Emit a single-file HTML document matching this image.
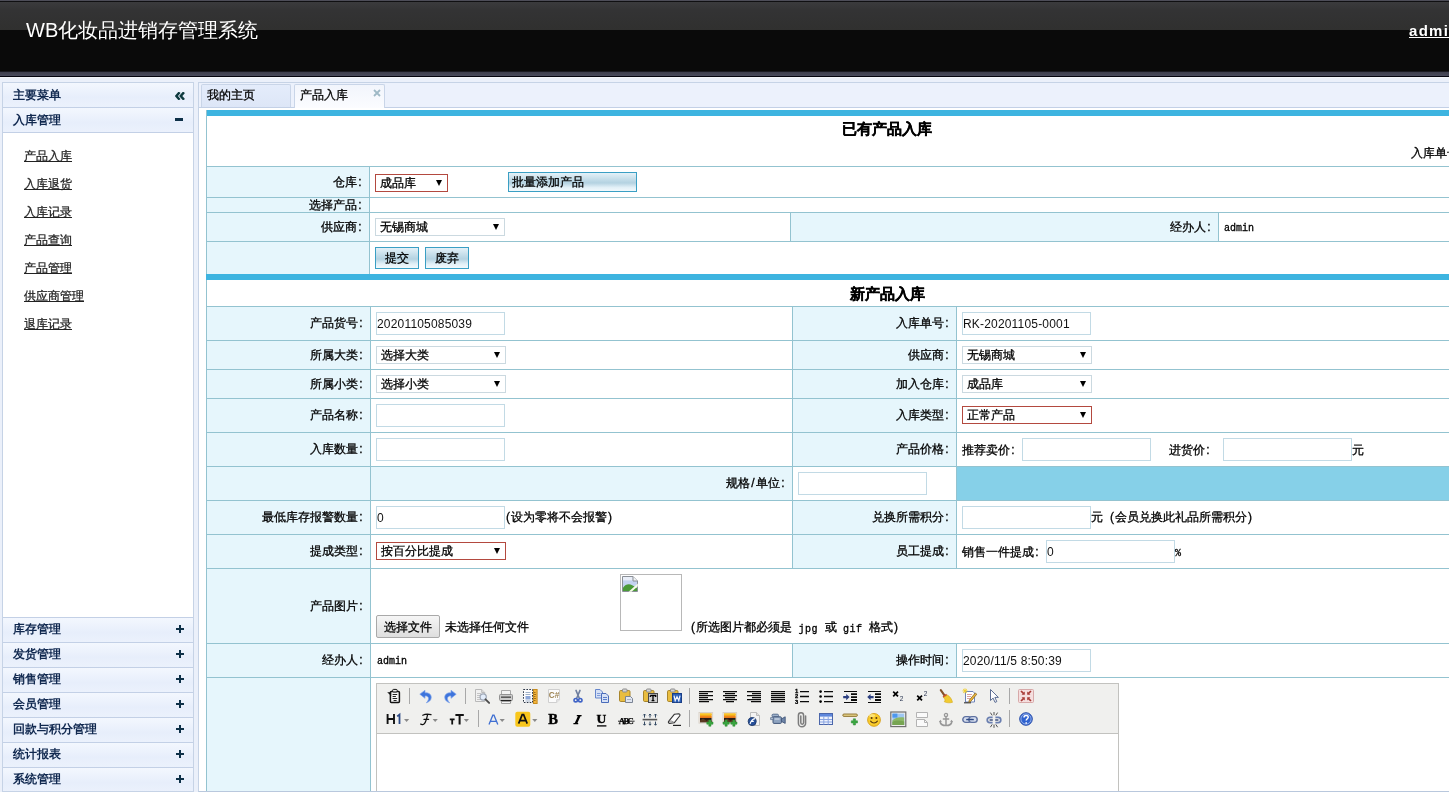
<!DOCTYPE html>
<html lang="zh">
<head>
<meta charset="utf-8">
<title>WB</title>
<style>
*{box-sizing:border-box;margin:0;padding:0}
html,body{width:1449px;height:792px;overflow:hidden;background:#ebf0fa;font-family:"Liberation Sans",sans-serif;font-size:12px;color:#000}
.a{position:absolute}
body>div{will-change:transform}
#hdr{left:0;top:0;width:1449px;height:78px;background:#0a0a0a}
#hdr .t0{left:0;top:0;width:1449px;height:1px;background:#4d4d58}
#hdr .t1{left:0;top:1px;width:1449px;height:1px;background:#101012}
#hdr .t2{left:0;top:2px;width:1449px;height:28px;background:linear-gradient(#3b3b3d,#333334 30%,#30302f)}
#hdr .t3{left:0;top:71px;width:1449px;height:1px;background:#1b1b22}
#hdr .t4{left:0;top:72px;width:1449px;height:4px;background:linear-gradient(#3e3f4d,#4a4c5e)}
#hdr .t5{left:0;top:76px;width:1449px;height:1px;background:#04040f}
#hdr .t6{left:0;top:77px;width:1449px;height:1px;background:#f4f7fb}
#title{left:26px;top:17px;font-size:20px;line-height:26px;color:#fff;white-space:nowrap}
#user{left:1409px;top:21px;font-size:15px;line-height:20px;font-weight:bold;color:#fff;text-decoration:underline;letter-spacing:1.3px;white-space:nowrap}

/* sidebar */
#side{left:2px;top:82px;width:192px;height:710px;background:#fff;border:1px solid #c6d3e6;overflow:hidden}
.ah{left:0;width:190px;height:25px;border-bottom:1px solid #c3d0e6;background:linear-gradient(#f3f7fe,#e7eefb 60%,#ebf1fc);color:#10284f;font-weight:bold;line-height:24px;padding-left:10px;white-space:nowrap}
.ah i{position:absolute;display:block;background:#0e3048}
.ml{left:21px;color:#222;text-decoration:underline;line-height:14px;white-space:nowrap}

/* main */
#main{left:198px;top:82px;width:1260px;height:710px;background:#fff;border:1px solid #c6d3e6;border-bottom-color:#b9c8dd;overflow:hidden}
#tabs{left:0;top:0;width:1258px;height:25px;background:#ecf1fc;border-bottom:1px solid #c3d0e6}
.tab{-webkit-text-stroke:.3px #000;top:1px;height:23px;border:1px solid #c9d5e8;border-bottom:0;line-height:20px;padding-left:4px;white-space:nowrap;border-radius:2px 2px 0 0}

/* page-coordinate layer */
#pg{left:-199px;top:-83px;width:1449px;height:792px;-webkit-text-stroke:.3px #000}
.ml{-webkit-text-stroke:.25px #222}
.bar{left:206px;width:1243px;height:6px;background:#3db4e0}
.hl{left:206px;width:1243px;height:1px;background:#93c3d0}
.vl{width:1px;background:#93c3d0}
.lb{background:#e6f6fc}
.lt{text-align:right;white-space:nowrap;line-height:14px;height:14px}
s{display:inline-block;width:6px;text-align:center;text-decoration:none}
.tx{white-space:nowrap;line-height:14px;height:14px}
.h1{font-weight:bold;font-size:15px;line-height:18px;text-align:center;width:200px;left:787px;white-space:nowrap}
.in{-webkit-text-stroke:0;height:23px;width:129px;border:1px solid #c2dae5;background:#fff;line-height:20px;padding:1px 0 0 0;white-space:nowrap;letter-spacing:.18px;color:#111}
.se{height:18px;width:130px;border:1px solid #cbd9e0;background:#fff;line-height:16px;padding-left:4px;white-space:nowrap}
.se.r{border-color:#b3493f}
.se:after{content:"";position:absolute;right:5px;top:5px;border:3.5px solid transparent;border-top:6px solid #000;border-bottom:0}
.bt{height:22px;border:1px solid #3a9fc4;background:linear-gradient(#e4f1f8,#c4dde9 35%,#b4d2e1 55%,#e2f0f7 80%,#f2f9fc);line-height:20px;text-align:center;white-space:nowrap}
.mn{font-family:"Liberation Mono",monospace;font-size:10px;position:relative;top:1px;letter-spacing:.5px}
.mono{margin-top:2px;font-family:"Liberation Mono",monospace;font-size:10px;letter-spacing:0}
</style>
</head>
<body>
<div id="hdr" class="a">
  <div class="a t0"></div><div class="a t1"></div><div class="a t2"></div>
  <div class="a t3"></div><div class="a t4"></div><div class="a t5"></div><div class="a t6"></div>
  <div id="title" class="a">WB化妆品进销存管理系统</div>
  <div id="user" class="a">admin</div>
</div>

<div id="side" class="a">
  <div class="a ah" style="top:0">主要菜单<svg class="a" style="left:172px;top:9px" width="10" height="8" viewBox="0 0 10 8"><path d="M4.6 0.3 L1.4 4 L4.6 7.7 M9 0.3 L5.8 4 L9 7.7" fill="none" stroke="#0e3a3f" stroke-width="2.5"/></svg></div>
  <div class="a ah" style="top:25px">入库管理<i style="left:172px;top:10px;width:8px;height:3px"></i></div>
  <div class="a ml" style="top:66px">产品入库</div>
  <div class="a ml" style="top:94px">入库退货</div>
  <div class="a ml" style="top:122px">入库记录</div>
  <div class="a ml" style="top:150px">产品查询</div>
  <div class="a ml" style="top:178px">产品管理</div>
  <div class="a ml" style="top:206px">供应商管理</div>
  <div class="a ml" style="top:234px">退库记录</div>
  <div class="a ah" style="top:534px;height:26px;line-height:22px;border-top:1px solid #c3d0e6">库存管理<i style="left:173px;top:10px;width:8px;height:2px"></i><i style="left:176px;top:7px;width:2px;height:8px"></i></div>
  <div class="a ah" style="top:559px;height:26px;line-height:22px;border-top:1px solid #c3d0e6">发货管理<i style="left:173px;top:10px;width:8px;height:2px"></i><i style="left:176px;top:7px;width:2px;height:8px"></i></div>
  <div class="a ah" style="top:584px;height:26px;line-height:22px;border-top:1px solid #c3d0e6">销售管理<i style="left:173px;top:10px;width:8px;height:2px"></i><i style="left:176px;top:7px;width:2px;height:8px"></i></div>
  <div class="a ah" style="top:609px;height:26px;line-height:22px;border-top:1px solid #c3d0e6">会员管理<i style="left:173px;top:10px;width:8px;height:2px"></i><i style="left:176px;top:7px;width:2px;height:8px"></i></div>
  <div class="a ah" style="top:634px;height:26px;line-height:22px;border-top:1px solid #c3d0e6">回款与积分管理<i style="left:173px;top:10px;width:8px;height:2px"></i><i style="left:176px;top:7px;width:2px;height:8px"></i></div>
  <div class="a ah" style="top:659px;height:26px;line-height:22px;border-top:1px solid #c3d0e6">统计报表<i style="left:173px;top:10px;width:8px;height:2px"></i><i style="left:176px;top:7px;width:2px;height:8px"></i></div>
  <div class="a ah" style="top:684px;height:26px;line-height:22px;border-top:1px solid #c3d0e6">系统管理<i style="left:173px;top:10px;width:8px;height:2px"></i><i style="left:176px;top:7px;width:2px;height:8px"></i></div>
</div>

<div id="main" class="a">
  <div id="tabs" class="a"></div>
  <div class="a tab" style="left:2px;width:90px;padding-left:5px;background:linear-gradient(#e4ecfb,#dde6f7)">我的主页</div>
  <div class="a tab" style="left:95px;width:91px;padding-left:5px;background:linear-gradient(#f2f5fc,#fbfcff);height:24px">产品入库<svg class="a" style="left:78px;top:4px" width="8" height="8" viewBox="0 0 8 8"><path d="M1 1 L7 7 M7 1 L1 7" stroke="#9fb9c6" stroke-width="1.8" fill="none"/></svg></div>
<div id="pg" class="a">
<div class="a bar" style="top:110px"></div>
<div class="a vl" style="left:206px;top:110px;height:682px"></div>
<div class="a h1" style="top:120px">已有产品入库</div>
<div class="a tx" style="left:1411px;top:146px">入库单号：</div>
<div class="a lb" style="left:207px;top:167px;width:162px;height:107px"></div>
<div class="a lb" style="left:791px;top:213px;width:427px;height:28px"></div>
<div class="a hl" style="top:166px"></div>
<div class="a hl" style="top:197px"></div>
<div class="a hl" style="top:212px"></div>
<div class="a hl" style="top:241px"></div>
<div class="a vl" style="left:369px;top:166px;height:108px"></div>
<div class="a vl" style="left:790px;top:212px;height:30px"></div>
<div class="a vl" style="left:1218px;top:212px;height:30px"></div>
<div class="a lt" style="left:207px;width:156px;top:175px">仓库<s>:</s></div>
<div class="a lt" style="left:207px;width:156px;top:198px">选择产品<s>:</s></div>
<div class="a lt" style="left:207px;width:156px;top:220px">供应商<s>:</s></div>
<div class="a lt" style="left:791px;width:421px;top:220px">经办人<s>:</s></div>
<div class="a tx mono" style="left:1224px;top:220px">admin</div>
<div class="a se r" style="left:375px;top:174px;width:73px">成品库</div>
<div class="a bt" style="left:508px;top:172px;width:129px;height:20px;line-height:18px;text-align:left;padding-left:3px">批量添加产品</div>
<div class="a se" style="left:375px;top:218px">无锡商城</div>
<div class="a bt" style="left:375px;top:247px;width:44px">提交</div>
<div class="a bt" style="left:425px;top:247px;width:44px">废弃</div>
<div class="a bar" style="top:274px"></div>
<div class="a h1" style="top:285px">新产品入库</div>
<div class="a lb" style="left:207px;top:307px;width:163px;height:485px"></div>
<div class="a lb" style="left:793px;top:307px;width:163px;height:159px"></div>
<div class="a lb" style="left:371px;top:467px;width:421px;height:33px"></div>
<div class="a" style="left:957px;top:467px;width:492px;height:33px;background:#86d0e8"></div>
<div class="a lb" style="left:793px;top:501px;width:163px;height:67px"></div>
<div class="a lb" style="left:793px;top:644px;width:163px;height:33px"></div>
<div class="a hl" style="top:306px"></div>
<div class="a hl" style="top:340px"></div>
<div class="a hl" style="top:369px"></div>
<div class="a hl" style="top:398px"></div>
<div class="a hl" style="top:432px"></div>
<div class="a hl" style="top:466px"></div>
<div class="a hl" style="top:500px"></div>
<div class="a hl" style="top:534px"></div>
<div class="a hl" style="top:568px"></div>
<div class="a hl" style="top:643px"></div>
<div class="a hl" style="top:677px"></div>
<div class="a vl" style="left:370px;top:306px;height:486px"></div>
<div class="a vl" style="left:792px;top:306px;height:263px"></div>
<div class="a vl" style="left:956px;top:306px;height:263px"></div>
<div class="a vl" style="left:792px;top:643px;height:35px"></div>
<div class="a vl" style="left:956px;top:643px;height:35px"></div>
<div class="a lt" style="left:207px;width:157px;top:316px">产品货号<s>:</s></div>
<div class="a in" style="left:376px;top:312px;width:129px">20201105085039</div>
<div class="a lt" style="left:793px;width:157px;top:316px">入库单号<s>:</s></div>
<div class="a in" style="left:962px;top:312px;width:129px">RK-20201105-0001</div>
<div class="a lt" style="left:207px;width:157px;top:348px">所属大类<s>:</s></div>
<div class="a se" style="left:376px;top:346px;width:130px">选择大类</div>
<div class="a lt" style="left:793px;width:157px;top:348px">供应商<s>:</s></div>
<div class="a se" style="left:962px;top:346px;width:130px">无锡商城</div>
<div class="a lt" style="left:207px;width:157px;top:377px">所属小类<s>:</s></div>
<div class="a se" style="left:376px;top:375px;width:130px">选择小类</div>
<div class="a lt" style="left:793px;width:157px;top:377px">加入仓库<s>:</s></div>
<div class="a se" style="left:962px;top:375px;width:130px">成品库</div>
<div class="a lt" style="left:207px;width:157px;top:408px">产品名称<s>:</s></div>
<div class="a in" style="left:376px;top:404px;width:129px"></div>
<div class="a lt" style="left:793px;width:157px;top:408px">入库类型<s>:</s></div>
<div class="a se r" style="left:962px;top:406px;width:130px">正常产品</div>
<div class="a lt" style="left:207px;width:157px;top:442px">入库数量<s>:</s></div>
<div class="a in" style="left:376px;top:438px;width:129px"></div>
<div class="a lt" style="left:793px;width:157px;top:442px">产品价格<s>:</s></div>
<div class="a tx" style="left:962px;top:443px">推荐卖价<s>:</s></div>
<div class="a in" style="left:1022px;top:438px;width:129px"></div>
<div class="a tx" style="left:1169px;top:443px">进货价<s>:</s></div>
<div class="a in" style="left:1223px;top:438px;width:129px"></div>
<div class="a tx" style="left:1352px;top:443px">元</div>
<div class="a lt" style="left:371px;width:415px;top:476px">规格<s>/</s>单位<s>:</s></div>
<div class="a in" style="left:798px;top:472px;width:129px"></div>
<div class="a lt" style="left:207px;width:157px;top:510px">最低库存报警数量<s>:</s></div>
<div class="a in" style="left:376px;top:506px;width:129px">0</div>
<div class="a tx" style="left:505px;top:510px"><s>(</s>设为零将不会报警<s>)</s></div>
<div class="a lt" style="left:793px;width:157px;top:510px">兑换所需积分<s>:</s></div>
<div class="a in" style="left:962px;top:506px;width:129px"></div>
<div class="a tx" style="left:1091px;top:510px">元<s> </s><s>(</s>会员兑换此礼品所需积分<s>)</s></div>
<div class="a lt" style="left:207px;width:157px;top:544px">提成类型<s>:</s></div>
<div class="a se r" style="left:376px;top:542px;width:130px">按百分比提成</div>
<div class="a lt" style="left:793px;width:157px;top:544px">员工提成<s>:</s></div>
<div class="a tx" style="left:962px;top:545px">销售一件提成<s>:</s></div>
<div class="a in" style="left:1046px;top:540px;width:129px">0</div>
<div class="a tx mono" style="left:1175px;top:545px">%</div>
<div class="a lt" style="left:207px;width:157px;top:599px">产品图片<s>:</s></div>
<div class="a" style="left:376px;top:615px;width:64px;height:23px;border:1px solid #a9a9a9;border-radius:2px;background:linear-gradient(#f6f6f6,#dedede);line-height:22px;text-align:center;white-space:nowrap">选择文件</div>
<div class="a tx" style="left:445px;top:620px">未选择任何文件</div>
<div class="a" style="left:620px;top:574px;width:62px;height:57px;border:1px solid #b8b8b8;background:#fff"><svg class="a" style="left:1px;top:1px" width="16" height="16" viewBox="0 0 16 16"><path d="M.5.5h10.500l4.500 4.500v10.500H.5z" fill="#c4d3f0" stroke="#8a8f96"/><path d="M1 1h9.800v3.400H1z" fill="#e9eef8"/><path d="M1 15v-3.200c2.400-3.800 6.200-4.400 9.200-2.600L15 12v3z" fill="#4b9a38"/><path d="M11 .5v4.500h4.500" fill="#f3f3f3" stroke="#8a8f96"/><path d="M6.500 15.800L15.800 7.500v2.800L9.600 15.800z" fill="#f6fbe8"/></svg></div>
<div class="a tx" style="left:690px;top:620px"><s>(</s>所选图片都必须是<span class="mn">&nbsp;jpg&nbsp;</span>或<span class="mn">&nbsp;gif&nbsp;</span>格式<s>)</s></div>
<div class="a lt" style="left:207px;width:157px;top:653px">经办人<s>:</s></div>
<div class="a tx mono" style="left:377px;top:653px">admin</div>
<div class="a lt" style="left:793px;width:157px;top:653px">操作时间<s>:</s></div>
<div class="a in" style="left:962px;top:649px;width:129px">2020/11/5 8:50:39</div>
<div id="ed" class="a" style="left:376px;top:683px;width:743px;height:120px;border:1px solid #c2c2bf;background:#fff"><div class="a" style="left:0;top:0;width:741px;height:50px;background:#f0f0ee;border-bottom:1px solid #c2c2bf"></div><!--ICONS-->
<svg class="a" style="left:9px;top:4px" width="16" height="16" viewBox="0 0 16 16"><path d="M5.400 3.600h7a1 1 0 0 1 1 1v8.800a1 1 0 0 1-1 1h-7a1 1 0 0 1-1-1V4.600a1 1 0 0 1 1-1z" fill="#f6f6f6" stroke="#111" stroke-width="1.5"/><rect x="6.600" y="1.400" width="4.600" height="2.600" rx="1" fill="#e8e8e8" stroke="#111"/><path d="M6.600 6.500h4.600M6.600 8.500h3.300M6.600 10.500h4.600M7.600 12.500h3" stroke="#222"/><path d="M1.200 4.200l4 3.800V4.200z" fill="#111"/></svg>
<div class="a" style="left:32px;top:4px;width:1px;height:16px;background:#a8a8a8"></div>
<svg class="a" style="left:41px;top:4px" width="16" height="16" viewBox="0 0 16 16"><path d="M1.8 6.2L7 2.3v2.5c4.2-.3 6.6 2 6.2 5.2-.3 2.4-2.3 4-4.9 4.8 2-1.9 2.6-3.9 2-5.3-.5-1.2-1.6-1.7-3.3-1.6v2.4z" fill="#3d74dc" stroke="#7fa3ea" stroke-width=".7"/></svg>
<svg class="a" style="left:65px;top:4px" width="16" height="16" viewBox="0 0 16 16"><g transform="translate(16 0) scale(-1 1)"><path d="M1.8 6.2L7 2.3v2.5c4.2-.3 6.6 2 6.2 5.2-.3 2.4-2.3 4-4.9 4.8 2-1.9 2.6-3.9 2-5.3-.5-1.2-1.6-1.7-3.3-1.6v2.4z" fill="#3d74dc" stroke="#7fa3ea" stroke-width=".7"/></g></svg>
<div class="a" style="left:88px;top:4px;width:1px;height:16px;background:#a8a8a8"></div>
<svg class="a" style="left:97px;top:4px" width="16" height="16" viewBox="0 0 16 16"><path d="M1.5 1.5h6.2l3 3v9h-9.2z" fill="#f1f1f1" stroke="#b9b9b9"/><path d="M7.7 1.5v3h3" fill="#ddd" stroke="#b9b9b9"/><path d="M3 5.5h4M3 7.5h3M3 9.5h3M3 11.5h4" stroke="#c4c4c4"/><circle cx="9.2" cy="9" r="3.1" fill="#e3edfb" stroke="#9da6b5" stroke-width="1.2"/><path d="M11.5 11.3l3.6 3.6" stroke="#4c4c4c" stroke-width="1.9" stroke-linecap="round"/></svg>
<svg class="a" style="left:121px;top:4px" width="16" height="16" viewBox="0 0 16 16"><path d="M3.5 2.5h9v4h-9z" fill="#f4f4f4" stroke="#a9a9a9"/><rect x="1.5" y="6.5" width="13" height="6" rx="1" fill="#cbcbcb" stroke="#929292"/><path d="M3 9.200h10" stroke="#5c5c5c" stroke-width="1.600"/><path d="M2.800 12.800h10.400" stroke="#111" stroke-width="1.300"/><path d="M3.500 13.500h9v2h-9z" fill="#f4f4f4" stroke="#a0a0a0"/></svg>
<svg class="a" style="left:145px;top:4px" width="16" height="16" viewBox="0 0 16 16"><rect x="1.5" y="1.5" width="9" height="13" fill="#fdfdfd" stroke="#2b3546" stroke-dasharray="1.600 1.300"/><path d="M3.5 4.5h5M3.5 6.5h5" stroke="#9fb0c8"/><rect x="3.5" y="8" width="5" height="3.5" fill="#8da7d8"/><path d="M3.5 13h5" stroke="#9fb0c8"/><rect x="11.5" y="1.5" width="3.6" height="14" fill="#f3b43c" stroke="#c78d1f"/><path d="M12 4.5h1.5M12 6.5h2M12 8.5h1.5M12 10.5h2M12 12.5h1.5" stroke="#8a5d10" stroke-width=".8"/></svg>
<svg class="a" style="left:169px;top:4px" width="16" height="16" viewBox="0 0 16 16"><path d="M2.5 1.5h11v10.2l-2.8 2.8H2.5z" fill="#fbfbfb" stroke="#cfcfcf"/><path d="M13.5 11.7h-2.8v2.8" fill="#e9e9e9" stroke="#cfcfcf"/><text x="2.800" y="10.200" font-family="Liberation Sans" font-weight="bold" font-size="8.300" fill="#9c8352">C#</text></svg>
<svg class="a" style="left:193px;top:4px" width="16" height="16" viewBox="0 0 16 16"><path d="M6 2.400l3.200 7.600M10 2.400L6.800 10" stroke="#6f7f9f" stroke-width="1.600" stroke-linecap="round"/><circle cx="5.700" cy="12.200" r="1.700" fill="none" stroke="#3f63c6" stroke-width="1.600"/><circle cx="10.300" cy="12.200" r="1.700" fill="none" stroke="#3f63c6" stroke-width="1.600"/></svg>
<svg class="a" style="left:217px;top:4px" width="16" height="16" viewBox="0 0 16 16"><path d="M1.500 1.500h4.500l2.500 2.500v6h-7z" fill="#d6e1f6" stroke="#6686cc"/><path d="M3 5.500h3.500M3 7.500h3.500" stroke="#7f9bd8"/><path d="M7.500 5.500h4.500l2.500 2.500v6.500h-7z" fill="#d6e1f6" stroke="#4a6cba"/><path d="M9 9.500h4M9 11.500h4" stroke="#5b7ecb"/></svg>
<svg class="a" style="left:241px;top:4px" width="16" height="16" viewBox="0 0 16 16"><rect x="1.5" y="2.5" width="10.5" height="11" rx="1.2" fill="#e9bd3f" stroke="#a9862b"/><rect x="4.5" y="1" width="4.5" height="3" rx=".8" fill="#d4d4d4" stroke="#8c8c8c"/><path d="M7.5 8.5h5l2 2v4h-7z" fill="#dfe5f0" stroke="#7b8494"/><path d="M9 11.5h4" stroke="#aab3c4"/></svg>
<svg class="a" style="left:265px;top:4px" width="16" height="16" viewBox="0 0 16 16"><rect x="1.5" y="2.5" width="10.5" height="11" rx="1.2" fill="#e9bd3f" stroke="#a9862b"/><rect x="4.5" y="1" width="4.5" height="3" rx=".8" fill="#d4d4d4" stroke="#8c8c8c"/><rect x="6.500" y="5.500" width="9" height="9" fill="#cfcfcf" stroke="#4a4a4a"/><path d="M8.300 7.500h5.400v1.600M8.300 7.500v1.600M11 7.500v5.200M9.600 12.700h2.800" stroke="#000" stroke-width="1.300" fill="none"/></svg>
<svg class="a" style="left:289px;top:4px" width="16" height="16" viewBox="0 0 16 16"><rect x="1.5" y="2.5" width="10.5" height="11" rx="1.2" fill="#e9bd3f" stroke="#a9862b"/><rect x="4.5" y="1" width="4.5" height="3" rx=".8" fill="#d4d4d4" stroke="#8c8c8c"/><rect x="6.500" y="5.500" width="9" height="9" fill="#2b5fb6" stroke="#1b3f86"/><path d="M8 7.600l1.200 5 1.800-4 1.800 4 1.200-5" stroke="#f4f7ff" stroke-width="1.200" fill="none"/></svg>
<div class="a" style="left:312px;top:4px;width:1px;height:16px;background:#a8a8a8"></div>
<svg class="a" style="left:321px;top:4px" width="16" height="16" viewBox="0 0 16 16"><path d="M1 3.6h14M1 5.6h9M1 7.6h14M1 9.6h9M1 11.6h14M1 13.6h10" stroke="#0a0a0a" stroke-width="1.15"/></svg>
<svg class="a" style="left:345px;top:4px" width="16" height="16" viewBox="0 0 16 16"><path d="M1 3.6h14M3 5.6h10M1 7.6h14M3 9.6h10M1 11.6h14M4 13.6h8" stroke="#0a0a0a" stroke-width="1.15"/></svg>
<svg class="a" style="left:369px;top:4px" width="16" height="16" viewBox="0 0 16 16"><path d="M1 3.6h14M6 5.6h9M1 7.6h14M6 9.6h9M1 11.6h14M5 13.6h10" stroke="#0a0a0a" stroke-width="1.15"/></svg>
<svg class="a" style="left:393px;top:4px" width="16" height="16" viewBox="0 0 16 16"><path d="M1 3.6h14M1 5.6h14M1 7.6h14M1 9.6h14M1 11.6h14M1 13.6h14" stroke="#0a0a0a" stroke-width="1.15"/></svg>
<svg class="a" style="left:417px;top:4px" width="16" height="16" viewBox="0 0 16 16"><path d="M6 3.6h9M6 8.5h9M6 13.6h9" stroke="#0a0a0a" stroke-width="1.3"/><g font-family="Liberation Sans" font-weight="bold" font-size="5.800" fill="#000" stroke="#000" stroke-width=".300"><text x="1" y="5.4">1</text><text x="1" y="10.4">2</text><text x="1" y="15.6">3</text></g></svg>
<svg class="a" style="left:441px;top:4px" width="16" height="16" viewBox="0 0 16 16"><path d="M6 3.6h9M6 8.5h9M6 13.6h9" stroke="#0a0a0a" stroke-width="1.3"/><circle cx="2.6" cy="3.6" r="1.3"/><circle cx="2.6" cy="8.5" r="1.3"/><circle cx="2.6" cy="13.6" r="1.3"/></svg>
<svg class="a" style="left:465px;top:4px" width="16" height="16" viewBox="0 0 16 16"><path d="M2 3.500h13M2 14.500h13" stroke="#0a0a0a" stroke-width="1.100"/><path d="M9 6.200h6M9 9.100h6M9 12h6" stroke="#0a0a0a" stroke-width="1.800"/><path d="M1.200 8h3V6l3.400 3.100L4.200 12.200v-2h-3z" fill="#2c3f80"/></svg>
<svg class="a" style="left:489px;top:4px" width="16" height="16" viewBox="0 0 16 16"><path d="M2 3.500h13M2 14.500h13" stroke="#0a0a0a" stroke-width="1.100"/><path d="M9 6.200h6M9 9.100h6M9 12h6" stroke="#0a0a0a" stroke-width="1.800"/><path d="M7.600 8h-3V6L1.200 9.100l3.400 3.100v-2h3z" fill="#2c3f80"/></svg>
<svg class="a" style="left:513px;top:4px" width="16" height="16" viewBox="0 0 16 16"><path d="M3.2 3.6l4.800 4.800M8 3.600l-4.800 4.800" stroke="#000" stroke-width="1.700"/><text x="9.800" y="13.400" font-family="Liberation Sans" font-size="6.5" fill="#26324f">2</text></svg>
<svg class="a" style="left:537px;top:4px" width="16" height="16" viewBox="0 0 16 16"><path d="M3.200 7.600l4.800 4.800M8 7.600l-4.800 4.800" stroke="#000" stroke-width="1.700"/><text x="9.800" y="8" font-family="Liberation Sans" font-size="6.5" fill="#26324f">2</text></svg>
<svg class="a" style="left:561px;top:4px" width="16" height="16" viewBox="0 0 16 16"><path d="M2.800 2.200l4 5.600" stroke="#84522a" stroke-width="2.1" stroke-linecap="round"/><path d="M4.6 8.2l3.6-2.4 1.2 1.6-3.7 2.5z" fill="#c9502e"/><path d="M5.6 9.6l3.9-2.5c2.6 1.6 4.3 4 5 7.2-3 .9-5.7.6-8.3-.6 1.3-1 1-2.6-.6-4.1z" fill="#f1cb31" stroke="#d5a91c" stroke-width=".6"/></svg>
<svg class="a" style="left:585px;top:4px" width="16" height="16" viewBox="0 0 16 16"><path d="M3.5 3.5h7.5l1.5 1.5v9h-9z" fill="#fff" stroke="#6c82b8"/><path d="M5 6.5h5M5 8.5h4M5 10.5h3" stroke="#d9a0a0"/><path d="M2 14.8h7" stroke="#333" stroke-width="1.1"/><path d="M14.8 6.2l-6 7.2-2 .9.5-2.2 6-7.1z" fill="#f0b73a" stroke="#8a6a22" stroke-width=".8"/><path d="M3 .4v5M.5 2.9h5M1.2 1.1l3.6 3.6M4.8 1.1L1.2 4.7" stroke="#f2cf2f" stroke-width="1"/></svg>
<svg class="a" style="left:609px;top:4px" width="16" height="16" viewBox="0 0 16 16"><path d="M4.5 1.5v11l2.6-2.4 1.9 4.3 1.8-.8-1.9-4.2h3.5z" fill="#fdfdff" stroke="#4d6089" stroke-width=".900" stroke-linejoin="round"/></svg>
<div class="a" style="left:632px;top:4px;width:1px;height:16px;background:#a8a8a8"></div>
<svg class="a" style="left:641px;top:4px" width="16" height="16" viewBox="0 0 16 16"><rect x=".5" y="1.5" width="15" height="13" rx="1" fill="#f5dfdf" stroke="#d7a9a9"/><g fill="#a83b37"><path d="M6.8 6.8H3.6l1-1L2.4 3.6l1.2-1.2 2.2 2.2 1-1zM9.2 6.8h3.2l-1-1 2.2-2.2-1.2-1.2-2.2 2.2-1-1zM6.8 9.2H3.6l1 1-2.2 2.2 1.2 1.2 2.2-2.2 1 1zM9.2 9.2h3.2l-1 1 2.2 2.2-1.2 1.2-2.2-2.2-1 1z"/></g></svg>
<svg class="a" style="left:9px;top:27px;overflow:visible" width="24" height="17" viewBox="0 0 24 17"><path d="M1.6 3v10M8 3v10M1.6 8h6.4" stroke="#111" stroke-width="1.9" fill="none"/><path d="M11.200 5.400l2.300-1.800V13" stroke="#2d4a86" stroke-width="1.8" fill="none"/><path d="M18 8h5.2l-2.6 3z" fill="#8a8a8a"/></svg>
<svg class="a" style="left:42px;top:27px;overflow:visible" width="22" height="17" viewBox="0 0 22 17"><path d="M3.800 4.300c2.200-1.300 5.400-1.500 8.200-.600M8.600 3.600c-.800 3.600-1.700 7-3 8.800-1.100 1.500-2.800 1.700-4 .7M5 8.400h4.600" stroke="#111" stroke-width="1.250" fill="none" stroke-linecap="round"/><path d="M13.6 8h5.2l-2.6 3z" fill="#8a8a8a"/></svg>
<svg class="a" style="left:71px;top:27px;overflow:visible" width="22" height="17" viewBox="0 0 22 17"><path d="M1.800 8.400h4.800M4.200 8.400v5" stroke="#111" stroke-width="1.800" fill="none"/><path d="M7.400 3.900h8.400M11.600 3.900v9.500" stroke="#111" stroke-width="2" fill="none"/><path d="M15.8 8h5.2l-2.6 3z" fill="#8a8a8a"/></svg>
<div class="a" style="left:101px;top:26px;width:1px;height:17px;background:#a8a8a8"></div>
<svg class="a" style="left:110px;top:27px;overflow:visible" width="18" height="17" viewBox="0 0 18 17"><path d="M2 13.600L5.800 4.200h1.200l3.800 9.400M3.400 10.300h6" stroke="#3f6fd2" stroke-width="1.300" fill="none"/><path d="M12.6 8h5.2l-2.6 3z" fill="#8a8a8a"/></svg>
<svg class="a" style="left:138px;top:27px;overflow:visible" width="23" height="17" viewBox="0 0 23 17"><rect x=".3" y=".8" width="15" height="15" rx="2" fill="#f8c61c"/><path d="M3.6 12.6L7.2 3.6h1.4l3.6 9M5 9.6h5.8" stroke="#111" stroke-width="1.7" fill="none"/><path d="M17.2 8h5.2l-2.6 3z" fill="#8a8a8a"/></svg>
<svg class="a" style="left:169px;top:27px;overflow:visible" width="16" height="17" viewBox="0 0 16 17"><text x="2.2" y="13.4" font-family="Liberation Serif" font-weight="bold" font-size="14.500" fill="#000" stroke="#000" stroke-width=".400">B</text></svg>
<svg class="a" style="left:193px;top:27px;overflow:visible" width="16" height="17" viewBox="0 0 16 17"><path d="M6.800 4.600h4.800M3.400 12.600h4.800" stroke="#000" stroke-width="1.300"/><path d="M8.200 4.600h2.600L7.200 12.600H4.600z" fill="#000"/></svg>
<svg class="a" style="left:217px;top:27px;overflow:visible" width="16" height="17" viewBox="0 0 16 17"><text x="2.6" y="12.4" font-family="Liberation Serif" font-weight="bold" font-size="13.5" fill="#000" stroke="#000" stroke-width=".4">U</text><path d="M3 14.9h9.4" stroke="#000" stroke-width="1.3"/></svg>
<svg class="a" style="left:241px;top:27px;overflow:visible" width="17" height="17" viewBox="0 0 17 17"><text x=".8" y="13" font-family="Liberation Serif" font-weight="bold" font-size="8.600" fill="#000" stroke="#000" stroke-width=".250" textLength="15">ABC</text><path d="M0 10.2h16.6" stroke="#111" stroke-width=".9"/></svg>
<svg class="a" style="left:265px;top:27px;overflow:visible" width="16" height="17" viewBox="0 0 16 17"><path d="M.6 8.6h14.6" stroke="#555" stroke-width="1.6"/><g stroke="#344a63" stroke-width="1" fill="none"><path d="M2.5 3v3.6M1.3 4.3l1.2-1.3 1.2 1.3M8 3v3.6M6.8 4.3L8 3l1.2 1.3M13.5 3v3.6M12.3 4.3L13.5 3l1.2 1.3"/><path d="M2.5 14.2v-3.6M1.3 12.9l1.2 1.3 1.2-1.3M8 14.2v-3.6M6.8 12.9L8 14.2l1.2-1.3M13.5 14.2v-3.6M12.3 12.9l1.2 1.3 1.2-1.3"/></g></svg>
<svg class="a" style="left:289px;top:27px;overflow:visible" width="16" height="17" viewBox="0 0 16 17"><path d="M8.5 3.2l4.3-.4c1.2.2 1.6 1.2.8 2.2L8.2 11.8l-4.6.6c-1.3-.3-1.6-1.3-.8-2.2z" fill="#fbfbfb" stroke="#333" stroke-width="1.1" stroke-linejoin="round"/><path d="M3 10.4c1.3-.6 3.2-.6 5 1.2" stroke="#777" fill="none"/><path d="M7 14.4h8" stroke="#222" stroke-width="1.2"/></svg>
<div class="a" style="left:312px;top:26px;width:1px;height:17px;background:#a8a8a8"></div>
<svg class="a" style="left:321px;top:27px;overflow:visible" width="16" height="17" viewBox="0 0 16 17"><rect x="1" y="1.5" width="13.6" height="10.6" fill="#f4efe9" stroke="#d9d2c8"/><rect x="2" y="2.500" width="11.600" height="4.200" fill="#f5a31c"/><rect x="2" y="2.500" width="11.600" height="1.600" fill="#f8c524"/><rect x="2" y="5.4" width="11.6" height="1.6" fill="#e9761a"/><rect x="2" y="7" width="11.6" height="4.2" fill="#2a1a12"/><path d="M2 9.5l3-2 3.4 2.2 2-1 3.2 1.6v.9H2z" fill="#5b3a22"/><path d="M10.8 11v-2h2.2v2h2v2.2h-2v2h-2.2v-2h-2v-2.2z" fill="#3aa640" stroke="#2c8a32" stroke-width=".5"/></svg>
<svg class="a" style="left:345px;top:27px;overflow:visible" width="16" height="17" viewBox="0 0 16 17"><rect x="1" y="1.5" width="13.6" height="10.6" fill="#f4efe9" stroke="#d9d2c8"/><rect x="2" y="2.500" width="11.600" height="4.200" fill="#f5a31c"/><rect x="2" y="2.500" width="11.600" height="1.600" fill="#f8c524"/><rect x="2" y="5.4" width="11.6" height="1.6" fill="#e9761a"/><rect x="2" y="7" width="11.6" height="4.2" fill="#2a1a12"/><path d="M2 9.5l3-2 3.4 2.2 2-1 3.2 1.6v.9H2z" fill="#5b3a22"/><path d="M3 11v-2h2.2v2h2v2.2h-2v2h-2.2v-2h-2v-2.2z" fill="#3aa640" stroke="#2c8a32" stroke-width=".5"/><path d="M10.8 11v-2h2.2v2h2v2.2h-2v2h-2.2v-2h-2v-2.2z" fill="#3aa640" stroke="#2c8a32" stroke-width=".5"/></svg>
<svg class="a" style="left:369px;top:27px;overflow:visible" width="16" height="17" viewBox="0 0 16 17"><path d="M4.5 1.5h6l3 3v10h-9z" fill="#f3f3f3" stroke="#bcbcbc"/><path d="M10.5 1.5v3h3" fill="#dedede" stroke="#bcbcbc"/><circle cx="6.2" cy="10.6" r="4" fill="#27509a" stroke="#1b3566" stroke-width=".900"/><path d="M4 13c1-3.2 2.4-5 5-5.4M5.6 10.4h2.2" stroke="#fff" stroke-width="1.1" fill="none"/></svg>
<svg class="a" style="left:393px;top:27px;overflow:visible" width="16" height="17" viewBox="0 0 16 17"><rect x="2" y="3.2" width="6.5" height="2.8" rx="1.2" fill="#9fb2cb" stroke="#4d6487" stroke-width=".9"/><rect x="3" y="5.8" width="8.4" height="6.6" rx="1" fill="#8fa4c0" stroke="#43587a"/><path d="M11.4 8l3.8-2.2v6.6L11.4 10.4z" fill="#6f86a8" stroke="#43587a" stroke-width=".9"/><path d="M.6 6.6h2.8v2H.6z" fill="#b8c6d8" stroke="#55698a" stroke-width=".7"/><path d="M4.6 8h5" stroke="#dfe7f1"/></svg>
<svg class="a" style="left:417px;top:27px;overflow:visible" width="16" height="17" viewBox="0 0 16 17"><path d="M11.6 5v7.2a3.6 3.6 0 0 1-7.2 0V4.4a2.6 2.6 0 0 1 5.2 0v7.4a1.4 1.4 0 0 1-2.8 0V5" fill="none" stroke="#7c7c7c" stroke-width="1.500" stroke-linecap="round"/></svg>
<svg class="a" style="left:441px;top:27px;overflow:visible" width="16" height="17" viewBox="0 0 16 17"><rect x="1.5" y="2.5" width="13" height="11" fill="#eef2fc" stroke="#4b66aa"/><rect x="2" y="3" width="12" height="2.6" fill="#5e87dc"/><path d="M2 8.5h12M2 11h12M5.8 5.6v7.9M10.2 5.6v7.9" stroke="#8aa5e2"/></svg>
<svg class="a" style="left:465px;top:27px;overflow:visible" width="16" height="17" viewBox="0 0 16 17"><rect x=".800" y="3" width="14.600" height="2.400" rx="1.2" fill="#e3cf86" stroke="#8a6d2a" stroke-width=".9"/><path d="M11.3 9.8v-2h2.2v2h2v2.2h-2v2h-2.2v-2h-2v-2.2z" fill="#3aa640" stroke="#2c8a32" stroke-width=".5"/></svg>
<svg class="a" style="left:489px;top:27px;overflow:visible" width="16" height="17" viewBox="0 0 16 17"><circle cx="8" cy="8.900" r="6.400" fill="#f9cc2b" stroke="#d69d14" stroke-width=".9"/><ellipse cx="6" cy="4.6" rx="3" ry="1.6" fill="#fde98a" opacity=".8"/><circle cx="5.6" cy="7" r="1" fill="#5a3a10"/><circle cx="10.4" cy="7" r="1" fill="#5a3a10"/><path d="M4.6 10.2c1.8 2.4 5 2.4 6.8 0" stroke="#5a3a10" stroke-width="1.1" fill="none" stroke-linecap="round"/></svg>
<svg class="a" style="left:513px;top:27px;overflow:visible" width="16.6" height="17" viewBox="0 0 16.6 17"><rect x=".8" y="1" width="15" height="14.6" fill="#eee" stroke="#6f6f6f" stroke-width="1.2"/><rect x="2.4" y="2.6" width="11.8" height="11.4" fill="#9ec7f2"/><rect x="2.4" y="2.6" width="5" height="4" fill="#4d97ee"/><path d="M2.4 9.4c3-3 6-3.4 11.8-3v7.6H2.4z" fill="#8db868"/><path d="M2.4 11c4-2.4 8-1.6 11.8-.6v3.6H2.4z" fill="#77a552"/></svg>
<svg class="a" style="left:537px;top:27px;overflow:visible" width="16" height="17" viewBox="0 0 16 17"><path d="M2.500 1.500h11v5h-11z" fill="#fafafa" stroke="#b3b3b3"/><path d="M2.5 8.5h8l3 3v4h-11z" fill="#fafafa" stroke="#b3b3b3"/><path d="M10.5 8.5v3h3" fill="none" stroke="#b3b3b3"/></svg>
<svg class="a" style="left:561px;top:27px;overflow:visible" width="16" height="17" viewBox="0 0 16 17"><g transform="translate(0 1) scale(.94) translate(.5 0)"><circle cx="8" cy="3.2" r="1.7" fill="none" stroke="#979797" stroke-width="1.4"/><path d="M8 5v9M4.6 7.4h6.8" stroke="#979797" stroke-width="1.6"/><path d="M1.6 9.6c.4 3 3 4.8 6.4 4.8s6-1.800 6.400-4.800" fill="none" stroke="#979797" stroke-width="1.7"/><path d="M.6 10.6l1.400-2.400 1.700 2.200zM15.400 10.600l-1.400-2.400-1.700 2.200z" fill="#979797"/></g></svg>
<svg class="a" style="left:585px;top:27px;overflow:visible" width="16" height="17" viewBox="0 0 16 17"><rect x=".8" y="5.600" width="8.400" height="5.800" rx="2.900" fill="#d3dbec" stroke="#5d709f" stroke-width="1.400"/><rect x="6.800" y="5.600" width="8.400" height="5.800" rx="2.900" fill="#d3dbec" stroke="#5d709f" stroke-width="1.400"/><path d="M4.200 8.500h7.600" stroke="#2e4a86" stroke-width="1.500"/><path d="M2.400 7.200h3M10.600 7.200h3" stroke="#cfdaf2" stroke-width=".8"/></svg>
<svg class="a" style="left:609px;top:27px;overflow:visible" width="16" height="17" viewBox="0 0 16 17"><path d="M6.600 6.400H3.800a2.600 2.600 0 0 0 0 5.200h2.800M9.400 6.400h2.800a2.600 2.600 0 0 1 0 5.200H9.400" fill="none" stroke="#6a7fb0" stroke-width="1.700"/><path d="M3.600 9h3.200M9.200 9h3.200" stroke="#3b4d7c" stroke-width="1.300"/><path d="M8 1v3.200M4.400 1.600l1.800 2.800M11.600 1.600L9.800 4.400M8 16.800v-3.200M4.400 16.200l1.800-2.800M11.600 16.200l-1.800-2.800" stroke="#3d3d3d" stroke-width=".9"/></svg>
<div class="a" style="left:632px;top:26px;width:1px;height:17px;background:#a8a8a8"></div>
<svg class="a" style="left:641px;top:27px;overflow:visible" width="16" height="17" viewBox="0 0 16 17"><circle cx="8" cy="8" r="6.300" fill="#2f62d0" stroke="#2b4fa8" stroke-width="1"/><circle cx="8" cy="8" r="5.100" fill="none" stroke="#a9c0f0" stroke-width=".800"/><path d="M6 6.400c0-2.600 4.200-2.600 4.200-.2 0 1.600-2 1.600-2 3.400M8.200 11.200v1.500" stroke="#fff" stroke-width="1.500" fill="none"/></svg>
<!--/ICONS--></div>
</div>
</div>
</body>
</html>
